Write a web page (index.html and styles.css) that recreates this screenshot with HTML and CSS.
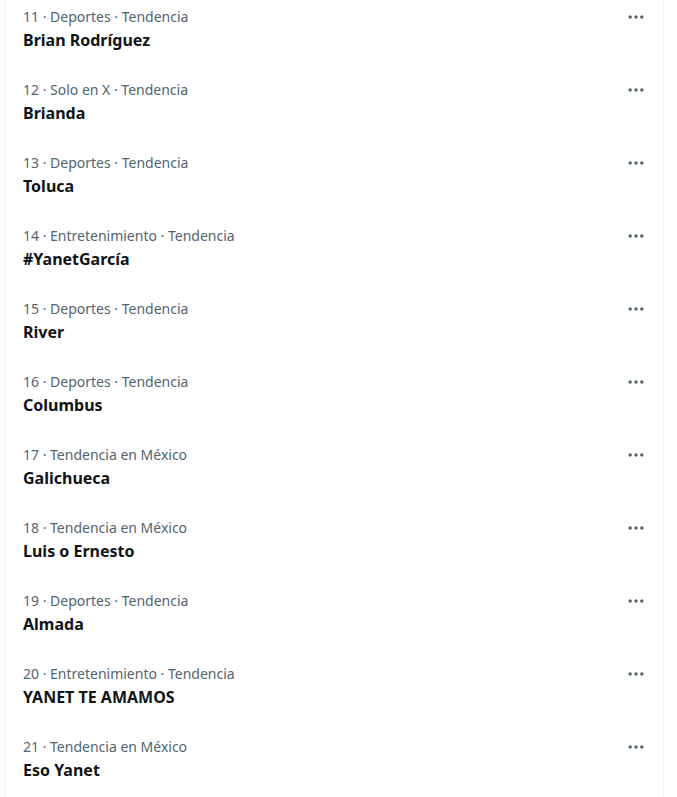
FILE: index.html
```html
<!DOCTYPE html>
<html lang="es">
  <head>
    <meta charset="UTF-8" />
    <title>Tendencias</title>
    <link rel="stylesheet" href="styles.css">
  </head>
  <body>
    <div class="column">
      <div id="trends"></div>
    </div>

    <script>
      const trends = [
        [11, "Deportes · Tendencia", "Brian Rodríguez"],
        [12, "Solo en X · Tendencia", "Brianda"],
        [13, "Deportes · Tendencia", "Toluca"],
        [14, "Entretenimiento · Tendencia", "#YanetGarcía"],
        [15, "Deportes · Tendencia", "River"],
        [16, "Deportes · Tendencia", "Columbus"],
        [17, "Tendencia en México", "Galichueca"],
        [18, "Tendencia en México", "Luis o Ernesto"],
        [19, "Deportes · Tendencia", "Almada"],
        [20, "Entretenimiento · Tendencia", "YANET TE AMAMOS"],
        [21, "Tendencia en México", "Eso Yanet"],
      ];

      const moreIcon =
        '<svg viewBox="0 0 24 24" width="20" height="20"><path d="M3 12c0-1.1.9-2 2-2s2 .9 2 2-.9 2-2 2-2-.9-2-2zm9 2c1.1 0 2-.9 2-2s-.9-2-2-2-2 .9-2 2 .9 2 2 2zm7 0c1.1 0 2-.9 2-2s-.9-2-2-2-2 .9-2 2 .9 2 2 2z"/></svg>';

      const list = document.getElementById("trends");
      trends.forEach(([rank, meta, name]) => {
        const row = document.createElement("div");
        row.className = "trend";
        row.innerHTML = `
          <div class="trend-text">
            <div class="trend-meta">${rank} · ${meta}</div>
            <div class="trend-name">${name}</div>
          </div>
          <button class="more-btn">${moreIcon}</button>`;
        list.appendChild(row);
      });
    </script>
  </body>
</html>
```

FILE: styles.css
```css
body {
  margin: 0;
  background: #ffffff;
  font-family: "Noto Sans", "Open Sans", Arial, sans-serif;
  overflow: hidden;
}

.column {
  width: 658px;
  margin-left: 4px;
  margin-top: -3px;
  border-left: 1px solid #eff3f4;
  border-right: 1px solid #eff3f4;
  min-height: 820px;
}

.trend {
  display: flex;
  align-items: flex-start;
  justify-content: space-between;
  padding: 12px 17px 20px 18px;
  cursor: pointer;
}

.trend:hover {
  background-color: #f7f9f9;
}

.trend-meta {
  font-size: 14px;
  line-height: 16px;
  color: #536471;
}

.trend-name {
  margin-top: 5px;
  font-size: 16px;
  line-height: 20px;
  font-weight: bold;
  color: #0f1419;
}

.more-btn {
  display: flex;
  margin-top: -2px;
  padding: 0;
  border: none;
  background: none;
  cursor: pointer;
}

.more-btn svg {
  fill: #536471;
}
```
